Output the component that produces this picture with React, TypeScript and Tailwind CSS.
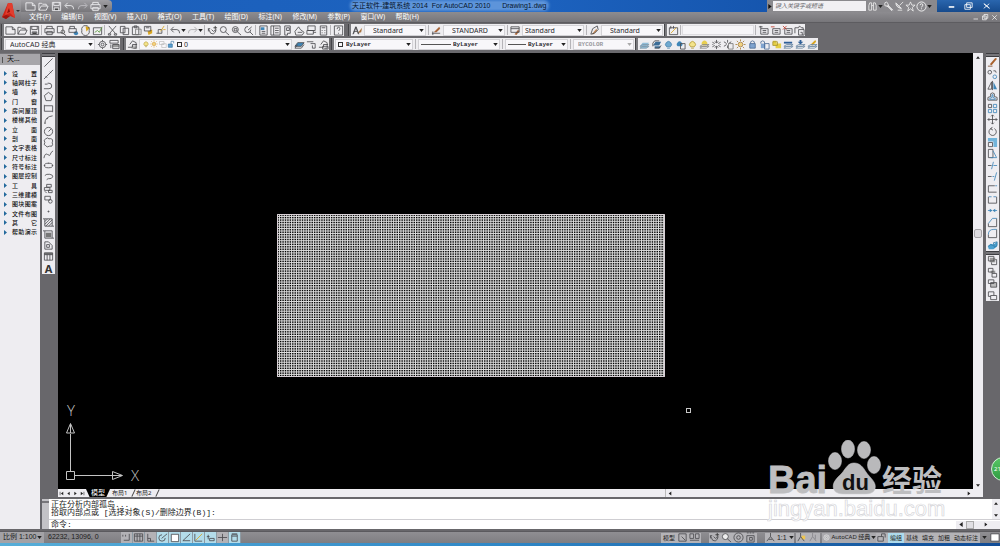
import type { ReactNode } from 'react'

type Glyph = {
  label: string
  d: string
  // second layer, drawn in colour over the first
  a?: string
  c?: string
  fill?: boolean
  stroke?: string
}

const BLUE = '#3f86b8'
const GOLD = '#d9a520'
const RED = '#c43b2c'

const bulb = 'M4 8.500a3.200 3.200 0 1 1 4 0zM4.500 10h3'
const layers = 'M1 8l3-2h7l-3 2zM1 10l3-2h7l-3 2z'

const fileTools: Glyph[] = [
  { label: '新建', d: 'M1 2h7l3 3v5H1zM8 2v3h3' },
  { label: '打开', d: 'M1 10V2.500h3l1 1h4v2M1 10l2.500-4.500H11L9 10z' },
  { label: '保存', d: 'M1.500 1.500h9v9h-9zM3 1.500v3.500h6V1.500M3.500 10.500v-3h5v3', a: 'M4 8h4v2H4z', c: '#444', fill: true },
]
const printTools: Glyph[] = [
  { label: '打印', d: 'M3 4V1.500h6V4M1 4h10v4.500H1zM3 7h6v3.500H3z' },
  { label: '打印预览', d: 'M1.500 1.500h6v7h-6zM8 9.500l3 2', a: 'M9.500 7.500a2 2 0 1 1-4 0a2 2 0 1 1 4 0', c: '#555' },
  { label: '发布', d: 'M2 4V1.500h5V4M1 4h8v4H1z', a: 'M11 9a2.300 2.300 0 1 1-4.600 0a2.300 2.300 0 1 1 4.600 0', c: BLUE, fill: true },
  { label: '三维打印', d: 'M10 6a4.200 4.200 0 1 1-8 0a4.200 4.200 0 1 1 8 0', a: 'M6 1l5 2-4 4z', c: GOLD, fill: true },
  { label: '图纸集', d: 'M1.500 3h9v7.500h-9z', a: 'M3 8l3-2 2 2 3-6', c: '#5b9a3c' },
]
const editTools: Glyph[] = [
  { label: '剪切', d: 'M2 1l7 8M10 1L3 9M1.500 9.500h2.500v1.500H1.500zM8 9.500h2.500v1.500H8z' },
  { label: '复制', d: 'M1.500 1.500h5v7h-5zM4.500 3.500h6v7h-6z' },
  { label: '粘贴', d: 'M1.500 2h7v8.500h-7zM3.500 1h3v2h-3z', a: 'M5 4.500h6v6H5z', c: '#777' },
  { label: '特性匹配', d: 'M1.500 1.500h7v5h-7zM3 3h4', a: 'M5 7l5-2v4l-4 2z', c: GOLD, fill: true },
  { label: '块编辑器', d: 'M1.500 9h6V5h-4v4', a: 'M6 7l4-6M9 5h2.500', c: GOLD },
]
const undo: Glyph = { label: '放弃', d: 'M4 2L1 5l3 3M1.500 5h6q3 0 3 4' }
const redo: Glyph = { label: '重做', d: 'M8 2l3 3-3 3M10.500 5h-6q-3 0-3 4', stroke: '#a5a5a8' }
const zoomTools: Glyph[] = [
  { label: '实时平移', d: 'M1.500 4l2.500 5q3 2 5-1l1-3M1.500 4v3M1.500 4h2M5 5l2 2 3-2', a: 'M9 1v4M7 3h4', c: '#333' },
  { label: '实时缩放', d: 'M8 5a3 3 0 1 1-6.500 0A3 3 0 1 1 8 5M7 7.500l4 3.500' },
  { label: '窗口缩放', d: 'M8 5a3 3 0 1 1-6.500 0A3 3 0 1 1 8 5M7 7.500l4 3.500M3.500 4h3v2.500h-3z' },
  { label: '缩放上一个', d: 'M8.500 5a3.300 3.300 0 1 1-3-3.300M7.500 7.500l3.500 3.500M5.500 5.500l4-3.500' },
]
const paletteTools: Glyph[] = [
  { label: '特性', d: 'M2 1h8v10H2zM4 7h4M4 9h4', a: 'M3 2.500h4v3H3z', c: BLUE, fill: true },
  { label: '设计中心', d: 'M1 1h10v10H1zM4 1v10M5.500 3.500h4M5.500 6h4M5.500 8.500h4' },
  { label: '工具选项板', d: 'M3 1h6v8H6v2H3zM5 3h3v3H5z' },
  { label: '图纸集管理器', d: 'M1 7l4-5 2 3 4 3-2 3H2zM4 8h5' },
  { label: '标记集管理器', d: 'M2 1h8v5H2zM1 6h7v4H1zM8 8h3' },
  { label: '快速计算器', d: 'M2.500 1h7v10h-7zM4 3h4M4 6h1M7 6h1M4 8.500h1M7 8.500h1' },
]
const help: Glyph = { label: '帮助', d: 'M1.500 1h9v10h-9zM4.500 4.500q0-2 1.500-2t1.500 1.500-1.500 2.500M6 8.500v1' }

const layerStates: Glyph[] = [
  { label: '将对象的图层置为当前', d: layers, a: 'M1 8l3-4h7L8 8zM1 10h7l3-2H4z', c: '#8fbcd8', fill: true, stroke: '#7f99aa' },
  { label: '上一个图层', d: 'M9 2H4Q1 4 2 8M4 10h5l2-3', a: 'M2 7l3-4h6L9 7zM4 8h6v2H4z', c: '#3b6d98', fill: true },
  { label: '图层隔离', d: bulb, c: '#6fa9d0', a: bulb, fill: true, stroke: '#4d86b0' },
  { label: '取消隔离', d: 'M6 5h5v6H6z', a: 'M3 8a3 3 0 1 1 4 0z', c: BLUE, fill: true },
  { label: '图层关闭', d: bulb, a: bulb, c: '#f3e38a', fill: true, stroke: '#b49b3b' },
  { label: '打开所有图层', d: layers, a: 'M4 7a3 3 0 1 1 4 0z', c: '#e8cf50', fill: true, stroke: '#888' },
  { label: '图层冻结', d: 'M6 1v3M6 8v3M1.500 3.500L4 5M8 7l2.500 1.500M10.500 3.500L8 5M4 7L1.500 8.500M4 3l2 1 2-1M4 9l2-1 2 1M2 5.500v1M10 5.500v1' },
  { label: '解冻图层', d: 'M5 1v3M1 3l3 2M9 3L6 5M4 6L1 8M5 7v3', a: 'M6 5h5v6H6z', c: '#777' },
  { label: '图层日光', d: 'M6 .5v2M6 9.500v2M.5 6h2M9.500 6h2M2 2l1.500 1.500M8.500 8.500L10 10M10 2L8.500 3.500M3.500 8.500L2 10M8.500 6a2.500 2.500 0 1 1-5 0a2.500 2.500 0 1 1 5 0', a: 'M8 6a2 2 0 1 1-4 0a2 2 0 1 1 4 0', c: '#f3d27a', fill: true, stroke: '#a67c38' },
  { label: '图层锁定', d: 'M4 5V3q2-2 4 0v2M3 5h6v5H3z', a: 'M3 5h6v5H3z', c: '#7fa3cf', fill: true, stroke: '#4c6c96' },
  { label: '图层解锁', d: 'M2 5V3q2-2 4 0v2M6 5h5v6H6z', a: 'M2 5h5v5H2z', c: '#7fa3cf', fill: true, stroke: '#4c6c96' },
  { label: '图层匹配', d: 'M2 3h5v4H2z', a: 'M2 2h4v3h5v5H5V7H2z', c: '#e5cf45', fill: true, stroke: '#a99530' },
  { label: '更改为当前图层', d: layers, a: 'M1 3h9v2H1z', c: '#2f5f98', fill: true, stroke: '#6f8aa5' },
  { label: '复制到新图层', d: layers, a: 'M5 1h2v2h2L6 6 3 3h2z', c: '#2f5f98', fill: true, stroke: '#6f8aa5' },
  { label: '图层漫游', d: layers, a: 'M4 6l5-5 1 2-4 4z', c: GOLD, fill: true, stroke: '#6f8aa5' },
]

const drawTools: Glyph[] = [
  { label: '直线', d: 'M1.500 10.500l9-9' },
  { label: '构造线', d: 'M1 11L11 1M3 8l1.500 1.500M7.500 3L9 4.500' },
  { label: '多段线', d: 'M1 9.500h5.500a3 3 0 0 0 0-6H5M2 4.500h3' },
  { label: '正多边形', d: 'M6 1.500l4.500 3.500-1.700 5.500H3.200L1.500 5z' },
  { label: '矩形', d: 'M1.500 3h9v6h-9zM1 2.500h1M10 9.500h1' },
  { label: '圆弧', d: 'M2 10.500Q2 3 10.500 2M1.500 10h1.500M4 5h1.500' },
  { label: '圆', d: 'M10.500 6a4.500 4.500 0 1 1-9 0a4.500 4.500 0 1 1 9 0M6 6l3-3' },
  { label: '修订云线', d: 'M3 2q2-2 3.500 0q4-1 4 2.500q-1 2 0 3.500q0 3-3.500 2q-3 2-4-.500q-3-1-1-3.500q-2-3 1-4' },
  { label: '样条曲线', d: 'M1 10q1-6 4-4t3 0 3-4' },
  { label: '椭圆', d: 'M10.500 6a4.500 2.500 0 1 1-9 0a4.500 2.500 0 1 1 9 0M1 6h1.500M9.500 6H11M6 3v1' },
  { label: '椭圆弧', d: 'M2 5a4.500 2.500 0 1 1 4 3.500M6 8l-2 1.500' },
  { label: '插入块', d: 'M4 1.500h5v3H4zM1.500 5h6v3h-6zM6 8h4v2.500H6zM2 9l2 2' },
  { label: '创建块', d: 'M2 2.500h6v4H2zM10 8a2 2 0 1 1-4 0a2 2 0 1 1 4 0' },
  { label: '点', d: 'M5.500 5.500h1v1h-1z' },
  { label: '图案填充', d: 'M2 2h8v8H2zM2 5l3-3M2 8l6-6M3 10l7-7M6 10l4-4M0 2h2M10 10h2' },
  { label: '渐变色', d: 'M2 2h8v8H2zM0 2h2M10 10h2', a: 'M3 4h6v5H3z', c: '#777', fill: true },
  { label: '面域', d: 'M2 10V2h4l4 4v4zM4 5h3v3H4z' },
  { label: '表格', d: 'M1.500 2h9v8h-9zM1.500 4h9M4.500 4v6M7.500 4v6', a: 'M1.500 2h9v2h-9z', c: '#777', fill: true },
]
const modifyTools: Glyph[] = [
  { label: '删除', d: 'M1 10h5', a: 'M3 8l6-7 2 1-6 7z', c: '#a8612d', fill: true, stroke: '#7a4a2a' },
  { label: '复制', d: 'M5 3.500a2 2 0 1 1-4 0a2 2 0 1 1 4 0M7 2q3-1 3 2', a: 'M10.500 8.500a2 2 0 1 1-4 0a2 2 0 1 1 4 0', c: BLUE },
  { label: '镜像', d: 'M5 2v8H1zM6 1v10', a: 'M7 2v8h4z', c: BLUE, fill: true },
  { label: '偏移', d: 'M1 10V7l3-1V3q2-2 4 0v3l3 1v3z', a: 'M3 9V8l2.500-1V4h1v3L9 8v1z', c: BLUE },
  { label: '阵列', d: 'M1.500 1.500h3.500v3.500h-3.500z', a: 'M7 1.500h3.500V5H7zM1.500 7H5v3.500H1.500zM7 7h3.500v3.500H7z', c: BLUE },
  { label: '移动', d: 'M6 1v10M1 6h10M4.500 2.500L6 1l1.500 1.500M4.500 9.500L6 11l1.500-1.500M2.500 4.500L1 6l1.500 1.500M9.500 4.500L11 6 9.500 7.500' },
  { label: '旋转', d: 'M5 2.500a4 4 0 1 0 3 .300M6 1L4 3l2.500 1.500' },
  { label: '缩放', d: 'M1.500 6h4.500v4.500H1.500z', a: 'M1 1h10v10H7V5H1z', c: '#72b4da', fill: true },
  { label: '拉伸', d: 'M1.500 1.500h5v9h-5z', a: 'M6.500 3l4 7.500H4', c: BLUE },
  { label: '修剪', d: 'M1 6h4', a: 'M7 2L5 10M7 6h4', c: BLUE },
  { label: '延伸', d: 'M1 6h4', a: 'M6 6h2M10.500 1.500L8 10.500', c: BLUE },
  { label: '打断于点', d: 'M1.500 10V3h7M10.500 10h-9', a: 'M9 3h2', c: BLUE },
  { label: '打断', d: 'M1.500 3v7h9V3', a: 'M2 3h3M7 3h3', c: BLUE },
  { label: '合并', d: 'M1 6h3M8 6h3', a: 'M3 4v4L6 6zM9 4v4L6 6z', c: BLUE, fill: true, stroke: BLUE },
  { label: '倒角', d: 'M10.500 1.500v9h-9V7', a: 'M1.500 7L6 1.500h4.500', c: BLUE },
  { label: '圆角', d: 'M10.500 1.500v9h-9V7', a: 'M1.500 7q0-5.500 6-5.500h3', c: BLUE },
  { label: '分解', d: 'M1 7l3-2 3 1M7 3l4-1v4l-3 2z', a: 'M1 7l3-3 3 1 4-3v5l-4 3H2z', c: '#4ba0cf', fill: true, stroke: '#2f7ba8' },
]
const orderTools: Glyph[] = [
  { label: '前置', d: 'M1.500 1.500h6v5h-6zM5 8v2.500h5.500V5H9', a: 'M3 3h6v5H3z', c: '#999', fill: true },
  { label: '后置', d: 'M1.500 1.500h5v4h-5zM5.500 7h5v4h-5z', a: 'M4 4h5v3H4z', c: '#999', fill: true },
  { label: '置于对象之上', d: 'M1.500 2h6v4h-6zM4 5h6.500v5H4z', a: 'M4 5h7v5H4z', c: '#bbb', fill: true },
  { label: '置于对象之下', d: 'M1.500 2h6v4M1.500 2v5H4M4 6h6.500v4.500H4z' },
]

const snapTools: (Glyph & { on?: boolean })[] = [
  { label: '捕捉', d: 'M3 9h6V2M2 3v2M5 3v2' },
  { label: '栅格', d: 'M1.500 2h9v8h-9zM1.500 4.500h9M4.500 2v8M7.500 2v8' },
  { label: '正交', d: 'M3 2v8h7M3 7h3v3' },
  { label: '极轴', d: 'M9 6.500a3.500 3.500 0 1 1-3.500-3.500M5 7l6-5', on: true },
  { label: '对象捕捉', d: 'M2.500 2.500h8v8h-8z', a: 'M2.500 2.500h8v8h-8z', c: '#fff', fill: true, on: true },
  { label: '对象追踪', d: 'M10 2L2 9.500h8', on: true },
  { label: 'DUCS', d: 'M2 2v8h8', a: 'M3 9l7-7', c: GOLD, on: true },
  { label: 'DYN', d: 'M2 5h3M3.500 3v5M5 7h5v2.500H5z', on: true },
  { label: '线宽', d: 'M1 6h10M6 2v8' },
  { label: '快捷特性', d: 'M3 3h6v7H3zM3 2h6M3 4.500h6', on: true },
]

const menus = ['文件(F)', '编辑(E)', '视图(V)', '插入(I)', '格式(O)', '工具(T)', '绘图(D)', '标注(N)', '修改(M)', '参数(P)', '窗口(W)', '帮助(H)']

const palette = [
  '设置', '轴网柱子', '墙体', '门窗', '房间屋顶', '楼梯其他', '立面', '剖面', '文字表格',
  '尺寸标注', '符号标注', '图层控制', '工具', '三维建模', '图块图案', '文件布图', '其它', '帮助演示',
]

function Icon({ g, className = 'size-[11px]' }: { g: Glyph; className?: string }) {
  return (
    <svg viewBox="0 0 12 12" className={className} fill="none" stroke={g.stroke ?? '#4a4a4e'} strokeWidth="0.9">
      {g.fill && <path d={g.a} fill={g.c} stroke="none" />}
      <path d={g.d} />
      {g.a && !g.fill && <path d={g.a} stroke={g.c} />}
    </svg>
  )
}

function Tool({ g, className = 'w-3 h-3' }: { g: Glyph; className?: string }) {
  return (
    <button title={g.label} aria-label={g.label} className={`flex shrink-0 items-center justify-center ${className}`}>
      <Icon g={g} />
    </button>
  )
}

function Tools({ items }: { items: Glyph[] }) {
  return <>{items.map((g) => <Tool key={g.label} g={g} />)}</>
}

function Sep() {
  return <span className="mx-px h-[10px] w-px shrink-0 bg-[#b5b4b8]" />
}

function Grip() {
  return <span className="h-3 w-[3px] shrink-0 border-l border-[#444448] bg-[#7a7a7e]" />
}

function Arrow({ className = 'text-[#222]' }: { className?: string }) {
  return (
    <svg viewBox="0 0 6 4" className={`h-[3px] w-[5px] shrink-0 ${className}`} fill="currentColor">
      <path d="M0 0h6L3 4z" />
    </svg>
  )
}

function Bar({ children }: { children: ReactNode }) {
  return <div className="flex h-3 shrink-0 items-center bg-[#eeedf0]">{children}</div>
}

type ComboProps = { label: string; value: string; width: string; pad?: string; lead?: ReactNode; disabled?: boolean; mono?: boolean }

function Combo({ label, value, width, pad = 'pl-2', lead, disabled, mono }: ComboProps) {
  return (
    <div className={`relative mx-px h-[11px] shrink-0 bg-[#f8f7fa] ${width}`}>
      <select
        aria-label={label}
        disabled={disabled}
        className={`block h-full w-full appearance-none border border-[#d3d2d6] bg-transparent leading-[9px] ${pad} ${
          mono ? 'font-["Liberation_Mono"] text-[6px] font-bold' : 'text-[7px]'
        } ${disabled ? 'text-[#9a9a9e]' : 'text-[#2a2a2e]'}`}
      >
        <option>{value}</option>
      </select>
      {lead && <div className="pointer-events-none absolute inset-y-0 left-[3px] flex items-center">{lead}</div>}
      <div className="pointer-events-none absolute inset-y-0 right-[2px] flex items-center">
        <Arrow className={disabled ? 'text-[#aaa]' : 'text-[#222]'} />
      </div>
    </div>
  )
}

function Header() {
  const light = (g: Glyph): Glyph => ({ ...g, stroke: '#f4f4f6' })
  return (
    <header className="flex h-[23px] shrink-0 bg-[#858488]">
      <button aria-label="应用程序菜单" className="flex w-[21px] shrink-0 items-center bg-linear-to-b from-[#a5a4a8] to-[#737276]">
        <svg viewBox="0 0 21 22" className="h-[22px] w-[21px]">
          <path d="M2 16L8 2h4l3 15-5-2-4 3z" fill="#cf2418" />
          <path d="M8 2L5 14l5-2 5 5-3-15z" fill="#e23d2e" />
          <path d="M9 7l-2 5 3-1z" fill="#8c130d" />
          <path d="M2 16l4-2 4 1-4 3z" fill="#9b1610" />
          <path d="M16 9h4l-2 2z" fill="#333" />
        </svg>
      </button>
      <div className="flex min-w-0 flex-1 flex-col">
        <div className="flex h-3 justify-between bg-linear-to-r from-[#1b5fba] via-[#1d63c0] to-[#0f4a9e]">
          <div className="flex w-[91px] shrink-0 items-center justify-between rounded-r-sm bg-linear-to-b from-[#a09fa3] to-[#77767a] px-1">
            {fileTools.map((g) => <Tool key={g.label} g={light(g)} className="size-[11px]" />)}
            <Tool g={light(undo)} className="size-[11px]" />
            <Tool g={{ ...redo, stroke: '#c5c4c8' }} className="size-[11px]" />
            <Tool g={light(printTools[0])} className="size-[11px]" />
            <Arrow />
          </div>
          <h1 className="ml-auto w-[415px] self-center whitespace-pre font-['Liberation_Sans','Noto_Sans_CJK_SC',sans-serif] text-[7px] leading-3 text-[#06142c]">
            <span className="rounded-full bg-[#79a9e6]/70 shadow-[0_0_3px_2px_#79a9e6b3]">天正软件-建筑系统 2014  For AutoCAD 2010      Drawing1.dwg</span>
          </h1>
          <div className="flex w-[170px] shrink-0 items-center gap-px bg-[#8a898d] px-px">
            <svg viewBox="0 0 4 6" className="h-[5px] w-1"><path d="M0 0l4 3-4 3z" fill="#111" /></svg>
            <input
              aria-label="搜索"
              placeholder="键入关键字或短语"
              className="h-[10px] w-[94px] bg-[#f1f0f3] px-0.5 text-[6px] italic placeholder:text-[#67666a]"
            />
            <div className="flex flex-1 items-center justify-between pr-1">
              <Tool g={{ label: '查找', d: 'M2 10V5l1-3h2v8zM7 10V2h2l1 3v5zM5 5h2', stroke: '#eee' }} className="size-[11px]" />
              <Arrow />
              <Tool g={{ label: '速博应用', d: 'M4 1L2 2v3l3 1 1-2zM5 4l6 6M4 5l6 6M5 5l5 5', stroke: '#eee' }} className="size-[11px]" />
              <Tool g={{ label: '通讯中心', d: 'M2 2l6 6M2 2q0 5 6 6M3 3q0 4 5 5M4 10h5M10 1L6 5', stroke: '#eee' }} className="size-[11px]" />
              <Tool g={{ label: '收藏夹', d: 'M6 1l1.500 3.500H11L8 7l1 4-3-2.500L3 11l1-4-3-2.500h3.500z', stroke: '#eee' }} className="size-[11px]" />
              <Tool g={{ label: '帮助', d: 'M11 6a5 5 0 1 1-10 0a5 5 0 1 1 10 0M4.500 4.500q0-1.500 1.500-1.500t1.500 1.500L6 7M6 8v1', stroke: '#fff' }} className="size-[11px]" />
              <Arrow />
            </div>
          </div>
          <div className="flex w-[63px] shrink-0 items-center justify-between bg-linear-to-b from-[#2a66ae] to-[#164a8c] pr-2 pl-2">
            <Tool g={{ label: '最小化', d: 'M3 6h6M3 7h6', stroke: '#fff' }} />
            <Tool g={{ label: '还原', d: 'M4 2h6v5H4zM2 4h6v5H2z', stroke: '#fff' }} />
            <Tool g={{ label: '关闭', d: 'M3 3l6 5M9 3L3 8M3.500 3l6 5', stroke: '#fff' }} />
          </div>
        </div>
        <div className="flex h-[11px] items-center justify-between border-b border-[#5d5c60] bg-linear-to-b from-[#8d8c90] to-[#77767a] pr-px pl-2">
          <nav className="flex w-[390px] justify-between">
            {menus.map((m) => (
              <button key={m} className="whitespace-nowrap text-[7px] leading-[10px] text-white">{m}</button>
            ))}
          </nav>
          <div className="flex">
            <Tool g={{ label: '最小化图形', d: 'M2 8h6', stroke: '#fff' }} className="h-2 w-[9px]" />
            <Tool g={{ label: '还原图形', d: 'M4 2h5v5H4zM2 4h5v5H2z', stroke: '#fff' }} className="h-2 w-[9px]" />
            <Tool g={{ label: '关闭图形', d: 'M3 3l6 6M9 3L3 9', stroke: '#fff' }} className="h-2 w-[9px]" />
          </div>
        </div>
      </div>
    </header>
  )
}

function Toolbars() {
  const box = <span className="size-[5px] border border-[#333]" />
  return (
    <div className="flex shrink-0 flex-col gap-0.5 bg-[#6a696d] pt-px pb-[3px] pl-px">
      <div className="flex h-3">
        <Grip />
        <Bar>
          <Tools items={fileTools} />
          <Sep />
          <Tools items={printTools} />
          <Sep />
          <Tools items={editTools} />
          <Sep />
          <Tool g={undo} />
          <Arrow />
          <Tool g={redo} />
          <Arrow />
          <Sep />
          <Tools items={zoomTools} />
          <Sep />
          <Tools items={paletteTools} />
          <Sep />
          <Tool g={help} />
        </Bar>
        <span className="w-1" />
        <Grip />
        <Bar>
          <Tool g={{ label: '文字样式', d: 'M1 10L4 2l3 8M2 7h4M1.500 10L4.500 2l3 8', a: 'M6 9l5-6-1 5z', c: '#a87440', fill: true }} />
          <Combo label="文字样式" value="Standard" width="w-[62px]" />
          <Sep />
          <Tool g={{ label: '标注样式', d: 'M1 9h9M2 7v4', a: 'M3 8l6-6 1 2-4 4z', c: '#a8663a', fill: true }} />
          <Combo label="标注样式" value="STANDARD" width="w-[62px]" />
          <Sep />
          <Tool g={{ label: '表格样式', d: 'M1 2h9v6H1zM1 4h9', a: 'M5 10l4-5 1 2-3 4z', c: '#a8663a', fill: true }} />
          <Combo label="表格样式" value="Standard" width="w-[62px]" pad="pl-0.5" />
          <Sep />
          <Tool g={{ label: '多重引线样式', d: 'M2 10l2-6 5-3 1 4-4 4z', a: 'M3 10l5-6 1 2-4 4z', c: '#c08a5a', fill: true }} />
          <Combo label="多重引线样式" value="Standard" width="w-[62px]" />
        </Bar>
        <Grip />
        <Bar>
          <Tool g={{ label: '编辑参照', d: 'M1.500 3h9v7.500h-9zM3 1v3M6 1v3', a: 'M3 9l6-6', c: GOLD }} />
          <Sep />
          <input aria-label="参照名称" className="h-[10px] w-[72px] border border-[#dddce0] bg-[#f6f5f8]" />
          <Sep />
          <Tool g={{ label: '添加到工作集', d: 'M3 4h8v6H3zM5 6h4M5 8h4M1 2h4M3 1v3' }} />
          <Tool g={{ label: '从工作集删除', d: 'M3 4h8v6H3zM5 6h4M5 8h4', a: 'M1 2h4', c: RED }} />
          <Tool g={{ label: '关闭参照', d: 'M3 4h8v6H3zM5 6h4M5 8h4', a: 'M1 1l4 4M5 1L1 5', c: RED }} />
          <Tool g={{ label: '保存参照编辑', d: 'M1 9V3h4l1-2 2 2h2v2M5 5h6v6H5zM7 8h2v3' }} />
        </Bar>
      </div>
      <div className="flex h-3">
        <Grip />
        <Bar>
          <Combo label="工作空间" value="AutoCAD 经典" width="w-[90px]" pad="pl-1" />
          <Tool g={{ label: '工作空间设置', d: 'M9.500 6a3.500 3.500 0 1 1-7 0a3.500 3.500 0 1 1 7 0M7.500 6a1.500 1.500 0 1 1-3 0a1.500 1.500 0 1 1 3 0M6 1v1.500M6 9.500V11M1 6h1.500M9.500 6H11' }} />
          <Tool g={{ label: '我的工作空间', d: 'M1 1.500h9v3H1zM4 6h7v4.500H4zM2 6v4', a: 'M4 6h7v3H4z', c: '#999', fill: true }} />
        </Bar>
        <span className="w-[3px]" />
        <Grip />
        <Bar>
          <Tool g={{ label: '图层特性管理器', d: 'M1 9h5V6h5M3 6l3-4 4 2v6H7', a: 'M5 7h6v4H5z', c: '#bbb', fill: true }} />
          <Combo
            label="图层"
            value="0"
            width="w-[153px]"
            pad="pl-11"
            lead={
              <>
                <Icon g={layerStates[4]} className="size-2" />
                <Icon g={{ ...layerStates[8], stroke: '#d79b27' }} className="size-2" />
                <Icon g={{ label: '', d: 'M2 2h6v4H2zM5 5h6v5H5z', stroke: '#bbb' }} className="size-[9px]" />
                <Icon g={{ label: '', d: 'M2 6h6v5H2zM6 6V2h4v3', a: 'M2 6h6v5H2z', c: '#5b9fd0', fill: true, stroke: '#2d6d9c' }} className="mr-0.5 size-2" />
                {box}
              </>
            }
          />
          <Tool g={{ label: '置为当前', d: 'M1 8l3-4h7l-3 4zM1 10l3-4M1 10h7l3-4', a: 'M1 8l3-4h7l-3 4z', c: BLUE, fill: true }} />
          <Tool g={{ label: '上一图层', d: 'M1 3h7M5 5h5v5H7V7' }} />
          <Tool g={{ label: '图层状态', d: 'M1 9h5V6h5M3 6l3-4 4 2v6H7M5 8h6v3H5z' }} />
        </Bar>
        <span className="w-0.5" />
        <Grip />
        <Bar>
          <Combo label="颜色" value="ByLayer" width="w-[78px]" pad="pl-[10px]" mono lead={box} />
          <Sep />
          <Combo label="线型" value="ByLayer" width="w-[82px]" pad="pl-[34px]" mono lead={<span className="h-px w-[30px] bg-[#555]" />} />
          <Sep />
          <Combo label="线宽" value="ByLayer" width="w-[63px]" pad="pl-[22px]" mono lead={<span className="h-px w-[18px] bg-[#555]" />} />
          <Sep />
          <Combo label="打印样式" value="BYCOLOR" width="w-[61px]" pad="pl-1" mono disabled />
        </Bar>
        <Grip />
        <Bar><Tools items={layerStates} /></Bar>
      </div>
    </div>
  )
}

function Palette() {
  return (
    <aside className="flex w-10 shrink-0 flex-col bg-[#eeedf1] text-[#111]">
      <div className="flex h-3 items-center gap-1 border-t border-[#77767a] bg-[#a7a6aa] pl-0.5 text-[7px]">
        <span className="h-1.5 w-px bg-[#555]" />
        天...
      </div>
      <ul className="mt-1 flex h-[168px] flex-col pr-[3px] pl-1">
        {palette.map((name) => (
          <li key={name} className="flex-1">
            <button className="flex h-full w-full items-center justify-between">
              <svg viewBox="0 0 3 5" className="h-[5px] w-[3px]"><path d="M0 0l3 2.500L0 5z" fill="#23699c" /></svg>
              <span className="flex w-[25px] justify-between text-[6px] leading-none font-medium">
                {[...name].map((ch, i) => <span key={i}>{ch}</span>)}
              </span>
            </button>
          </li>
        ))}
      </ul>
    </aside>
  )
}

// fine cross hatch: the pitch is not a whole pixel, so the lines beat against the screen
function hatchLines(width: number, height: number, pitch: number) {
  let d = ''
  for (let x = 0; x < width; x += pitch) d += `M${x.toFixed(2)} 0v${height}`
  for (let y = 0; y < height; y += pitch) d += `M0 ${y.toFixed(2)}h${width}`
  return d
}

function Canvas() {
  return (
    <div className="relative min-h-0 flex-1 overflow-hidden bg-black">
      <svg className="absolute top-[161px] left-[219px] h-[163px] w-[388px]" fill="none">
        <path d={hatchLines(388, 163, 2.43)} stroke="#dedede" />
        <path d="M.5 .5h387v162H.5z" stroke="#d8d0d6" />
      </svg>
      <span className="absolute top-[355px] left-[628px] size-[5px] border border-[#c8c8c8]" />
      <svg viewBox="0 0 90 90" className="absolute bottom-0 left-0 size-[90px]" fill="none" stroke="#c4c4c4">
        <path d="M8.500 72.500h8v8h-8zM12.500 72V35M17 76.500h37" />
        <path d="M12.500 24.500l-4 9.500h8zM12.500 25v9M64.500 76.500L54.500 72.500v8zM55 76.500h9" />
        <g className="text-[15px] font-light" fill="#c4c4c4" stroke="none" fontFamily="Open Sans, Lato, sans-serif">
          <text x="9" y="17">Y</text>
          <text x="73" y="82">X</text>
        </g>
      </svg>
    </div>
  )
}

const scrollIcon = (label: string, d: string): Glyph => ({ label, d: '', a: d, c: '#222', fill: true })
const up = 'M3 8l3-4 3 4z'
const down = 'M3 4l3 4 3-4z'
const left = 'M8 3L4 6l4 3z'
const right = 'M4 3l4 3-4 3z'

function LayoutTabs() {
  return (
    <div className="flex h-2 shrink-0 items-center bg-[#eeedf1] text-[7px] text-[#222]">
      <Tool g={scrollIcon('第一个', 'M9 3L5 6l4 3zM3 3h1v6H3z')} className="h-2 w-[7px]" />
      <Tool g={scrollIcon('前一个', left)} className="h-2 w-[7px]" />
      <Tool g={scrollIcon('后一个', right)} className="h-2 w-[7px]" />
      <Tool g={scrollIcon('最后一个', 'M3 3l4 3-4 3zM8 3h1v6H8z')} className="h-2 w-[7px]" />
      <button className="h-2 w-6 bg-black leading-2 text-white [clip-path:polygon(0_0,100%_0,85%_100%,15%_100%)]">模型</button>
      {['布局1', '布局2'].map((t) => (
        <button key={t} className="flex h-2 w-6 items-center justify-between whitespace-nowrap pl-0.5 text-[6px] leading-2">
          {t}
          <span className="h-2 w-px rotate-[25deg] bg-[#444]" />
        </button>
      ))}
      <div className="ml-auto flex w-[318px] items-center justify-between border-l border-[#bbb] pr-[10px]">
        <Tool g={scrollIcon('向左滚动', left)} className="h-2 w-2" />
        <Tool g={scrollIcon('向右滚动', right)} className="h-2 w-2" />
      </div>
    </div>
  )
}

function CommandLine() {
  return (
    <section className="flex h-[30px] shrink-0 bg-white">
      <div className="w-[9px] shrink-0 border-l-2 border-[#66656a] bg-[#c3c2c6]">
        <div className="mt-0.5 h-0.5 bg-[#77767a]" />
      </div>
      <div className="flex min-w-0 flex-1 flex-col font-['Liberation_Mono','Noto_Sans_CJK_SC',monospace] text-[8px] text-[#222]">
        <div className="flex h-[21px] border-b border-[#cfced2]">
          <div className="flex flex-1 flex-col pt-0.5 pl-0.5 leading-2">
            <p>正在分析内部孤岛...</p>
            <p>拾取内部点或 [选择对象(S)/删除边界(B)]:</p>
          </div>
          <div className="flex w-2 flex-col justify-between bg-[#eeedf1]">
            <Tool g={scrollIcon('向上滚动', up)} className="h-2 w-2" />
            <Tool g={scrollIcon('向下滚动', down)} className="h-2 w-2" />
          </div>
        </div>
        <div className="flex h-[9px] items-center">
          <label htmlFor="cmd" className="pl-0.5 leading-[9px]">命令:</label>
          <input id="cmd" className="h-2 min-w-0 flex-1 px-1 outline-none" />
          <div className="flex w-11 items-center bg-[#eeedf1]">
            <Tool g={scrollIcon('命令左移', left)} className="h-2 w-[10px]" />
            <span className="h-2 w-2 border border-[#aaa] bg-[#e0dfe3]" />
            <Tool g={scrollIcon('命令右移', right)} className="ml-2 h-2 w-2" />
          </div>
        </div>
      </div>
    </section>
  )
}

function Dock({ children, height }: { children: ReactNode; height: string }) {
  return (
    <div className="flex w-[13px] flex-col">
      <span className="h-1 shrink-0 border-y border-[#3d3d41] bg-[#77767a]" />
      <div className={`flex flex-col bg-[#eeedf1] ${height}`}>{children}</div>
    </div>
  )
}

function StatusBar() {
  const cell = 'h-[10px] whitespace-nowrap px-0.5 text-[6px] leading-[10px]'
  const flat = 'h-[10px] w-3 bg-[#b4b3b7]'
  return (
    <footer className="flex h-3 shrink-0 items-center border-t border-[#5b5a5e] bg-linear-to-b from-[#8f8e92] to-[#7f7e82] text-[7px] text-[#1c1c20]">
      <button className="flex h-full w-[44px] items-center justify-between whitespace-nowrap bg-[#a3a2a6] pr-0.5 pl-[3px] font-['Liberation_Sans','Noto_Sans_CJK_SC',sans-serif]">
        比例 1:100 <Arrow />
      </button>
      <span className="w-[77px] whitespace-nowrap pl-1 font-['Liberation_Sans']">62232, 13096, 0</span>
      <div className="flex w-[114px] bg-[#9c9ba0]">
        {snapTools.map((g) => (
          <Tool key={g.label} g={g} className={`h-[11px] flex-1 border-r border-[#8d9ba4] ${g.on ? 'bg-[#b3dcea]' : 'bg-[#b3b2b6]'}`} />
        ))}
      </div>
      <div className="ml-auto flex items-center">
        <button className={`${cell} bg-[#b4b3b7]`}>模型</button>
        <Tool g={{ label: '快速查看布局', d: 'M2 2h8v8H2zM5 5l4 4' }} className={flat} />
        <Tool g={{ label: '快速查看图形', d: 'M1 2h4v5H1zM7 2h4v5H7zM1 9h10' }} className={flat} />
        <span className="w-2" />
        <Tool g={zoomTools[0]} className={flat} />
        <Tool g={{ ...zoomTools[1], a: 'M8 5a3 3 0 1 1-6.500 0A3 3 0 1 1 8 5', c: '#eee', fill: true }} className={flat} />
        <Tool g={{ label: '控制盘', d: 'M11 6a5 5 0 1 1-10 0a5 5 0 1 1 10 0M8 6a2 2 0 1 1-4 0a2 2 0 1 1 4 0' }} className={flat} />
        <Tool g={{ label: '运动显示', d: 'M2 4h8v7H2zM2 1h2M5 1h2M8 1h2M5 6h3v3H5z' }} className={flat} />
        <span className="w-2" />
        <Tool g={{ label: '注释比例', d: 'M6 1v4L2 10M6 5l4 5M4 8h4' }} className={flat} />
        <button className="flex h-[10px] w-[17px] items-center justify-between bg-[#b4b3b7] font-['Liberation_Sans'] leading-[10px]">
          1:1 <Arrow />
        </button>
        <Tool g={{ label: '注释可见性', d: 'M5 1v4L2 10M5 5l4 5', a: 'M6 4h4v4H6z', c: '#f0c650', fill: true }} className={`ml-0.5 ${flat}`} />
        <Tool g={{ label: '自动添加比例', d: 'M5 1v4L2 10M5 5l4 5M8 3v5', stroke: '#858489' }} className={flat} />
        <button className="ml-0.5 flex h-[10px] w-[54px] items-center justify-between whitespace-nowrap bg-[#aaa9ad] text-[6px]">
          <Icon g={{ label: '', d: 'M9.500 6a3.500 3.500 0 1 1-7 0a3.500 3.500 0 1 1 7 0M7.500 6a1.500 1.500 0 1 1-3 0a1.500 1.500 0 1 1 3 0', stroke: '#eee' }} className="size-[9px]" />
          AutoCAD 经典 <Arrow />
        </button>
        <Tool g={{ label: '锁定', d: 'M2 5h6v5H2zM6 5V2h4v4' }} className={flat} />
        {['编组', '基线', '填充', '加粗', '动态标注'].map((t, i) => (
          <button key={t} className={`${cell} ${i === 0 ? 'bg-[#aedbec]' : 'bg-[#b4b3b7]'}`}>{t}</button>
        ))}
        <span className="flex w-2 justify-center"><Arrow /></span>
        <Tool g={{ label: '全屏显示', d: 'M2 2h9v8H2z', a: 'M2 2h9v8H2z', c: '#fff', fill: true }} />
      </div>
    </footer>
  )
}

function Watermark() {
  return (
    <svg viewBox="0 0 180 84" className="pointer-events-none absolute right-[53px] bottom-[22px] h-[84px] w-[180px]">
      <g fill="#b9b9bb" stroke="#cfcfd2" strokeWidth="0.5">
        <ellipse cx="68" cy="21" rx="6.500" ry="8.500" />
        <ellipse cx="81" cy="9" rx="6.500" ry="9" />
        <ellipse cx="97" cy="10" rx="6.500" ry="8.500" />
        <ellipse cx="107" cy="25" rx="6.500" ry="8.500" />
        <path d="M87 23c6 0 9 4 12 9 4 6 11 10 9 17-2 6-9 5-20 5s-18 1-21-4c-3-7 3-12 8-17 4-5 6-10 12-10z" />
      </g>
      <g fontFamily="Liberation Sans, Noto Sans CJK SC, sans-serif" fontWeight="bold">
        <text x="1" y="53" fontSize="38" fill="#bebec0" stroke="#bebec0" strokeWidth="0.8">Bai</text>
        <text x="75" y="50" fontSize="22" fill="#111">du</text>
        <text x="115" y="51" fontSize="30" fill="#bebec0" fontFamily="Noto Sans CJK SC, sans-serif">经验</text>
        <text x="1" y="76" fontSize="22" fontWeight="normal" fill="#fff" stroke="#d6d6da" strokeWidth="0.7">jingyan.baidu.com</text>
      </g>
    </svg>
  )
}

export default function App() {
  return (
    <div className="relative flex h-screen flex-col overflow-hidden bg-[#68676b] font-['Noto_Sans','Noto_Sans_CJK_SC',sans-serif]">
      <Header />
      <Toolbars />
      <main className="flex min-h-0 flex-1 pb-0.5">
        <Palette />
        <div className="flex min-w-0 flex-1 flex-col">
          <div className="flex min-h-0 flex-1 pb-0.5">
            <div className="w-[18px] shrink-0 pl-0.5">
              <Dock height="h-[217px]">
                {drawTools.map((g) => <Tool key={g.label} g={g} className="min-h-0 flex-1" />)}
                <button aria-label="多行文字" className="min-h-0 flex-1 text-center text-[11px] leading-none font-bold text-[#333]">A</button>
              </Dock>
            </div>
            <div className="flex min-w-0 flex-1 flex-col">
              <div className="flex min-h-0 flex-1">
                <Canvas />
                <div className="flex w-[10px] shrink-0 flex-col items-center bg-[#eeedf1]">
                  <Tool g={scrollIcon('向上', up)} className="h-2 w-2" />
                  <span className="mt-[168px] h-[9px] w-2 rounded-xs border border-[#a5a4a8] bg-[#dddce0]" />
                  <Tool g={scrollIcon('向下', down)} className="mt-auto h-2 w-2" />
                </div>
              </div>
              <LayoutTabs />
            </div>
            <div className="w-[17px] shrink-0 pl-[3px]">
              <Dock height="h-[194px]">
                {modifyTools.map((g) => <Tool key={g.label} g={g} className="min-h-0 flex-1" />)}
              </Dock>
              <Dock height="h-[46px]">
                {orderTools.map((g) => <Tool key={g.label} g={g} className="min-h-0 flex-1" />)}
              </Dock>
            </div>
          </div>
          <CommandLine />
        </div>
      </main>
      <StatusBar />
      <div className="h-[3px] shrink-0 bg-linear-to-r from-[#57aed8] via-[#2f87c6] to-[#124c96]" />
      <Watermark />
      <div className="absolute right-[-15px] bottom-[65px] flex size-6 items-center rounded-full border border-[#d5efd8] bg-linear-to-b from-[#57c765] to-[#2f9c41] pl-0.5 text-[6px] text-white">
        21
      </div>
    </div>
  )
}
